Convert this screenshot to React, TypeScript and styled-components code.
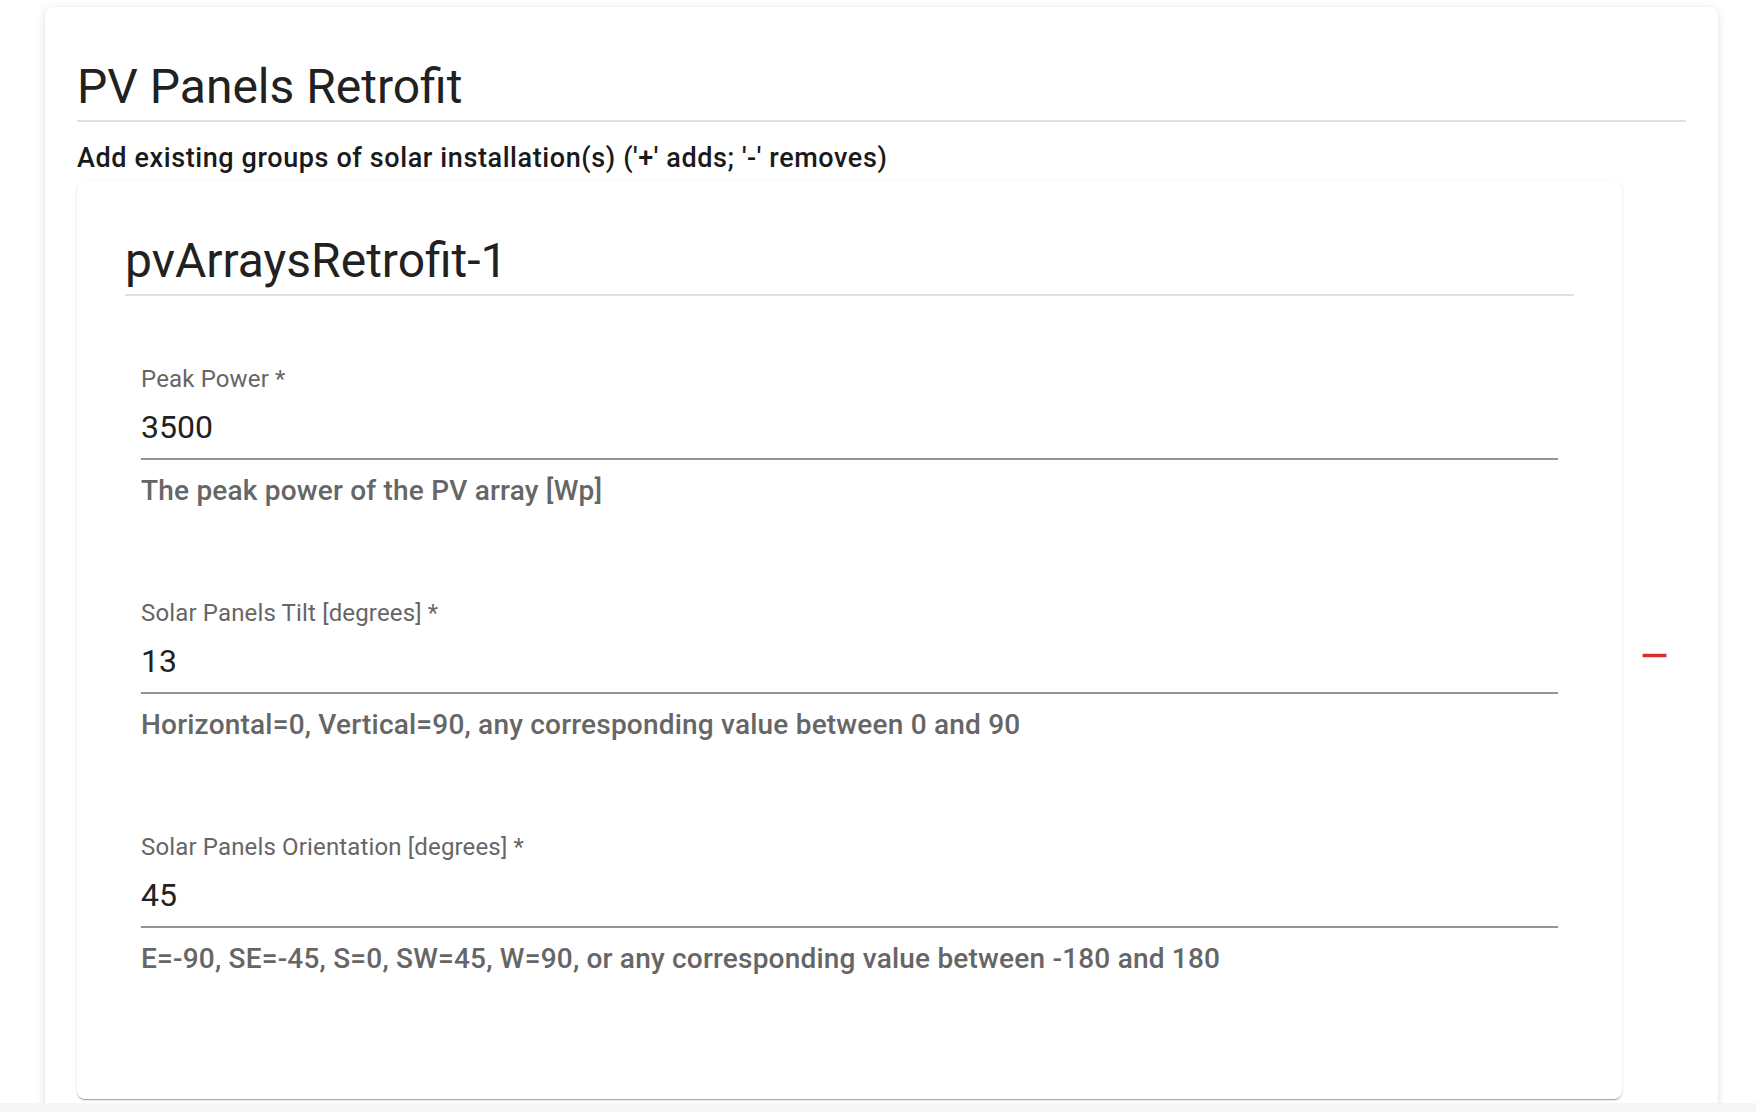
import styled, { createGlobalStyle } from 'styled-components';

const fields = [
  {
    label: 'Peak Power *',
    value: '3500',
    help: 'The peak power of the PV array [Wp]',
  },
  {
    label: 'Solar Panels Tilt [degrees] *',
    value: '13',
    help: 'Horizontal=0, Vertical=90, any corresponding value between 0 and 90',
  },
  {
    label: 'Solar Panels Orientation [degrees] *',
    value: '45',
    help: 'E=-90, SE=-45, S=0, SW=45, W=90, or any corresponding value between -180 and 180',
  },
];

export default function App() {
  return (
    <>
      <GlobalStyle />
      <Page>
        <Main>
          <Card>
            <Title>PV Panels Retrofit</Title>
            <Divider />
            <Subtitle>Add existing groups of solar installation(s) ('+' adds; '-' removes)</Subtitle>
            <ArrayRow>
              <ItemCard>
                <ItemTitle>pvArraysRetrofit-1</ItemTitle>
                <Divider />
                <Fields>
                  {fields.map((f) => (
                    <Field key={f.label}>
                      <Label>{f.label}</Label>
                      <InputBox>
                        <Value>{f.value}</Value>
                      </InputBox>
                      <Helper>{f.help}</Helper>
                    </Field>
                  ))}
                </Fields>
              </ItemCard>
              <Actions>
                <RemoveButton aria-label="remove">
                  <svg width="41" height="41" viewBox="0 0 24 24">
                    <path d="M19 13H5v-2h14v2z" fill="currentColor" />
                  </svg>
                </RemoveButton>
              </Actions>
            </ArrayRow>
          </Card>
        </Main>
        <BottomStrip />
      </Page>
    </>
  );
}

const GlobalStyle = createGlobalStyle`
  html, body {
    margin: 0;
    padding: 0;
    background: #ffffff;
    font-family: Roboto, "Liberation Sans", sans-serif;
    color: rgba(0, 0, 0, 0.87);
  }
`;

const Page = styled.div`
  display: flex;
  flex-direction: column;
  height: 1112px;
  overflow: hidden;
`;

const Main = styled.div`
  height: 1103px;
  overflow: hidden;
  padding: 7px 38px 0 45px;
  box-sizing: border-box;
`;

const BottomStrip = styled.div`
  height: 9px;
  background: #f6f6f6;
`;

const Card = styled.div`
  background: #fff;
  border-radius: 8px;
  box-shadow: 0 2px 10px rgba(0, 0, 0, 0.12), 0 0 2px rgba(0, 0, 0, 0.06);
  padding: 52px 32px 40px;
  min-height: 1200px;
  box-sizing: border-box;
`;

const Title = styled.h3`
  margin: 0;
  font-size: 48px;
  font-weight: 400;
  line-height: 56px;
  color: #212121;
`;

const Divider = styled.hr`
  margin: 5px 0 0;
  border: none;
  height: 2px;
  background: #e0e0e0;
`;

const Subtitle = styled.div`
  margin-top: 18px;
  font-size: 27px;
  font-weight: 500;
  line-height: 36px;
  letter-spacing: 0.6px;
  color: #1a1a1a;
`;

const ArrayRow = styled.div`
  display: flex;
  align-items: center;
  margin-top: 5px;
`;

const ItemCard = styled.div`
  flex: 1;
  background: #fff;
  border-radius: 8px;
  box-shadow: 0 2px 1px -1px rgba(0, 0, 0, 0.2), 0 1px 1px 0 rgba(0, 0, 0, 0.14),
    0 1px 3px 0 rgba(0, 0, 0, 0.12);
  padding: 52px 48px 124px;
`;

const ItemTitle = styled.h5`
  margin: 0;
  font-size: 48px;
  font-weight: 400;
  line-height: 56px;
  color: #212121;
`;

const Fields = styled.div`
  display: flex;
  flex-direction: column;
  gap: 92px;
  padding: 69px 16px 0;
`;

const Field = styled.div`
  display: flex;
  flex-direction: column;
`;

const Label = styled.label`
  font-size: 24px;
  line-height: 28px;
  letter-spacing: 0.15px;
  color: #666;
`;

const InputBox = styled.div`
  margin-top: 14px;
  padding-bottom: 11px;
  border-bottom: 2px solid rgba(0, 0, 0, 0.42);
`;

const Value = styled.div`
  font-size: 32px;
  line-height: 40px;
  color: #212121;
`;

const Helper = styled.div`
  margin-top: 15px;
  font-size: 28px;
  font-weight: 500;
  line-height: 32px;
  letter-spacing: 0.2px;
  color: #666;
`;

const Actions = styled.div`
  width: 64px;
  display: flex;
  justify-content: center;
  padding-top: 30px;
`;

const RemoveButton = styled.button`
  border: none;
  background: none;
  padding: 0;
  display: flex;
  color: #d32f2f;
  cursor: pointer;
`;
